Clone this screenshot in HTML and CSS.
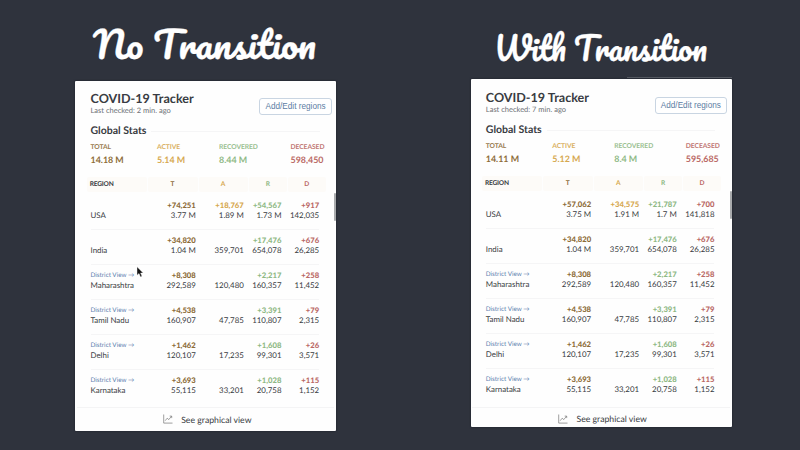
FILE: index.html
```html
<!DOCTYPE html>
<html lang="en">
<head>
<meta charset="utf-8">
<title>Transition comparison</title>
<link rel="stylesheet" href="styles.css">
</head>
<body>
<main class="stage">
  <section class="panel left">
    <h1><svg viewBox="0 0 261 81"><text x="18" y="59" textLength="223" lengthAdjust="spacingAndGlyphs">No Transition</text></svg></h1>
    <div class="card">
      <header><div><h2><span>COVID-19 Tracker</span></h2><p>Last checked: 2 min. ago</p></div><button>Add/Edit regions</button></header>
      <h3>Global Stats</h3>
      <div class="stats">
        <div class="t"><small>TOTAL</small><b>14.18 M</b></div><div class="a"><small>ACTIVE</small><b>5.14 M</b></div><div class="r"><small>RECOVERED</small><b>8.44 M</b></div><div class="d"><small>DECEASED</small><b>598,450</b></div>
      </div>
      <div class="thead"><span>REGION</span><span class="t">T</span><span class="a">A</span><span class="r">R</span><span class="d">D</span></div>
      <div class="rows">
        <div class="row"><div>USA</div><div><b class="t">+74,251</b>3.77 M</div><div><b class="a">+18,767</b>1.89 M</div><div><b class="r">+54,567</b>1.73 M</div><div><b class="d">+917</b>142,035</div></div>
        <div class="row"><div>India</div><div><b class="t">+34,820</b>1.04 M</div><div>359,701</div><div><b class="r">+17,476</b>654,078</div><div><b class="d">+676</b>26,285</div></div>
        <div class="row"><div><i>District View →</i>Maharashtra</div><div><b class="t">+8,308</b>292,589</div><div>120,480</div><div><b class="r">+2,217</b>160,357</div><div><b class="d">+258</b>11,452</div></div>
        <div class="row"><div><i>District View →</i>Tamil Nadu</div><div><b class="t">+4,538</b>160,907</div><div>47,785</div><div><b class="r">+3,391</b>110,807</div><div><b class="d">+79</b>2,315</div></div>
        <div class="row"><div><i>District View →</i>Delhi</div><div><b class="t">+1,462</b>120,107</div><div>17,235</div><div><b class="r">+1,608</b>99,301</div><div><b class="d">+26</b>3,571</div></div>
        <div class="row"><div><i>District View →</i>Karnataka</div><div><b class="t">+3,693</b>55,115</div><div>33,201</div><div><b class="r">+1,028</b>20,758</div><div><b class="d">+115</b>1,152</div></div>
      </div>
      <footer><svg viewBox="0 0 10 10"><path d="M.7.5v8.6h8.8M2.2 6.7l2-2.5 1.6 1.4 2.7-3.4M6.7 2.1h2v2"/></svg><span>See graphical view</span></footer>
      <div class="thumb"></div>
    </div>
  </section>
  <section class="panel right">
    <h1><svg viewBox="0 0 261 79"><text x="23" y="60.5" textLength="213" lengthAdjust="spacingAndGlyphs">With Transition</text></svg></h1>
    <div class="card">
      <header><div><h2><span>COVID-19 Tracker</span></h2><p>Last checked: 7 min. ago</p></div><button>Add/Edit regions</button></header>
      <h3>Global Stats</h3>
      <div class="stats">
        <div class="t"><small>TOTAL</small><b>14.11 M</b></div><div class="a"><small>ACTIVE</small><b>5.12 M</b></div><div class="r"><small>RECOVERED</small><b>8.4 M</b></div><div class="d"><small>DECEASED</small><b>595,685</b></div>
      </div>
      <div class="thead"><span>REGION</span><span class="t">T</span><span class="a">A</span><span class="r">R</span><span class="d">D</span></div>
      <div class="rows">
        <div class="row"><div>USA</div><div><b class="t">+57,062</b>3.75 M</div><div><b class="a">+34,575</b>1.91 M</div><div><b class="r">+21,787</b>1.7 M</div><div><b class="d">+700</b>141,818</div></div>
        <div class="row"><div>India</div><div><b class="t">+34,820</b>1.04 M</div><div>359,701</div><div><b class="r">+17,476</b>654,078</div><div><b class="d">+676</b>26,285</div></div>
        <div class="row"><div><i>District View →</i>Maharashtra</div><div><b class="t">+8,308</b>292,589</div><div>120,480</div><div><b class="r">+2,217</b>160,357</div><div><b class="d">+258</b>11,452</div></div>
        <div class="row"><div><i>District View →</i>Tamil Nadu</div><div><b class="t">+4,538</b>160,907</div><div>47,785</div><div><b class="r">+3,391</b>110,807</div><div><b class="d">+79</b>2,315</div></div>
        <div class="row"><div><i>District View →</i>Delhi</div><div><b class="t">+1,462</b>120,107</div><div>17,235</div><div><b class="r">+1,608</b>99,301</div><div><b class="d">+26</b>3,571</div></div>
        <div class="row"><div><i>District View →</i>Karnataka</div><div><b class="t">+3,693</b>55,115</div><div>33,201</div><div><b class="r">+1,028</b>20,758</div><div><b class="d">+115</b>1,152</div></div>
      </div>
      <footer><svg viewBox="0 0 10 10"><path d="M.7.5v8.6h8.8M2.2 6.7l2-2.5 1.6 1.4 2.7-3.4M6.7 2.1h2v2"/></svg><span>See graphical view</span></footer>
      <div class="thumb"></div>
      <div class="edge"></div>
    </div>
  </section>
  <svg class="cursor" viewBox="0 0 8 12"><path d="M1 .8v8.5l2-1.8 1.5 3.5 1.5-.7L4.6 7h2.6z"/></svg>
</main>
</body>
</html>
```
FILE: styles.css
```css
* { box-sizing: border-box; margin: 0; padding: 0; }
body { background: #2f333d; font-family: Lato, sans-serif; color: #393c42; overflow: hidden; text-rendering: geometricPrecision; }
.stage { position: relative; display: flex; gap: 134.5px; width: 800px; height: 450px; padding-left: 75px; }
.panel { width: 261px; flex: none; }
h1 { height: 81px; }
h1 svg { display: block; width: 261px; height: 81px; overflow: visible; }
h1 text { font: 400 36px Pacifico, "Brush Script MT", cursive; fill: #fff; stroke: #fff; stroke-width: .3px; }
.right { width: 261.5px; }
.right h1 { height: 79px; }
.right h1 svg { height: 79px; }
.right h1 text { font-size: 32px; }
.card { position: relative; height: 349.5px; background: #fefefe; border-radius: 1px; padding: 9.5px 0 0 15.5px; box-shadow: 0 0 2px #171b23; }
.right .card { height: 348px; padding-top: 10.7px; padding-left: 15.3px; }
header { display: flex; height: 34px; }
h2 { font-size: 12.6px; line-height: 16px; font-weight: 700; white-space: nowrap; }
header > div { width: 168.8px; }
header p { font-size: 7.5px; line-height: 8px; color: #6d7075; }
button { width: 72.5px; height: 16.5px; margin-top: 7.5px; border: 1px solid #c9d5e2; border-radius: 3px; background: #fff; color: #5c7da3; font: 8.2px "Liberation Sans", sans-serif; white-space: nowrap; }
h3 { display: flex; align-items: center; gap: 5px; width: 229px; height: 13px; font-size: 10.5px; line-height: 13px; font-weight: 700; }
h3::after { content: ""; flex: 1; height: 1px; background: #f5f5f6; }
.stats { display: grid; grid-template-columns: 66.5px 62px 71.5px 35px; height: 39.5px; padding-top: 4.5px; white-space: nowrap; }
.stats small { display: block; font-size: 6.7px; line-height: 11px; font-weight: 700; letter-spacing: -.05px; opacity: .9; }
.stats b { display: block; font-size: 8.9px; line-height: 14.5px; font-weight: 700; }
.t { color: #8d6c38; }
.a { color: #d6a84f; }
.r { color: #8fb985; }
.d { color: #ba6965; }
.thead { display: grid; grid-template-columns: 60px 50px 49px 38.5px 37.5px; gap: 1px; width: 239px; height: 13px; margin-left: -4px; }
.thead span { background: #fdfbf8; border-radius: 2px; font-size: 6.6px; font-weight: 700; line-height: 15px; text-align: center; }
.thead span:first-child { text-align: left; padding-left: 3.2px; letter-spacing: -.2px; }
.rows { margin-top: 5px; }
.row { display: grid; grid-template-columns: 54px 51.3px 48px 37.7px 37.7px; align-items: end; width: 228.7px; height: 35px; padding-bottom: 9px; border-bottom: 1px solid #f5f5f6; font-size: 7.9px; line-height: 10px; text-align: right; white-space: nowrap; }
.row:last-child { border-color: transparent; }
.row > div:first-child { text-align: left; }
.row b { display: block; font-size: 7.7px; line-height: 9px; font-weight: 900; }
.row i { display: block; font-style: normal; font-size: 6.35px; line-height: 9px; color: #5e83b0; }
footer { display: flex; align-items: center; height: 23px; margin: 2.4px 2px 0 -14px; padding-left: 86px; border-top: 1px solid #f4f4f5; font-size: 8.7px; }
footer svg { width: 10px; height: 10px; margin-right: 8.7px; fill: none; stroke: #777; stroke-width: .7; }
.thumb { position: absolute; right: 0; top: 112px; width: 2px; height: 28px; border-radius: 1px; background: #a9abad; }
.edge { position: absolute; right: 0; top: -2px; width: 105px; height: 1px; background: #555961; }
.cursor { position: absolute; left: 136px; top: 266px; width: 8px; height: 12px; fill: #151515; stroke: #fff; stroke-width: .4; }
```
